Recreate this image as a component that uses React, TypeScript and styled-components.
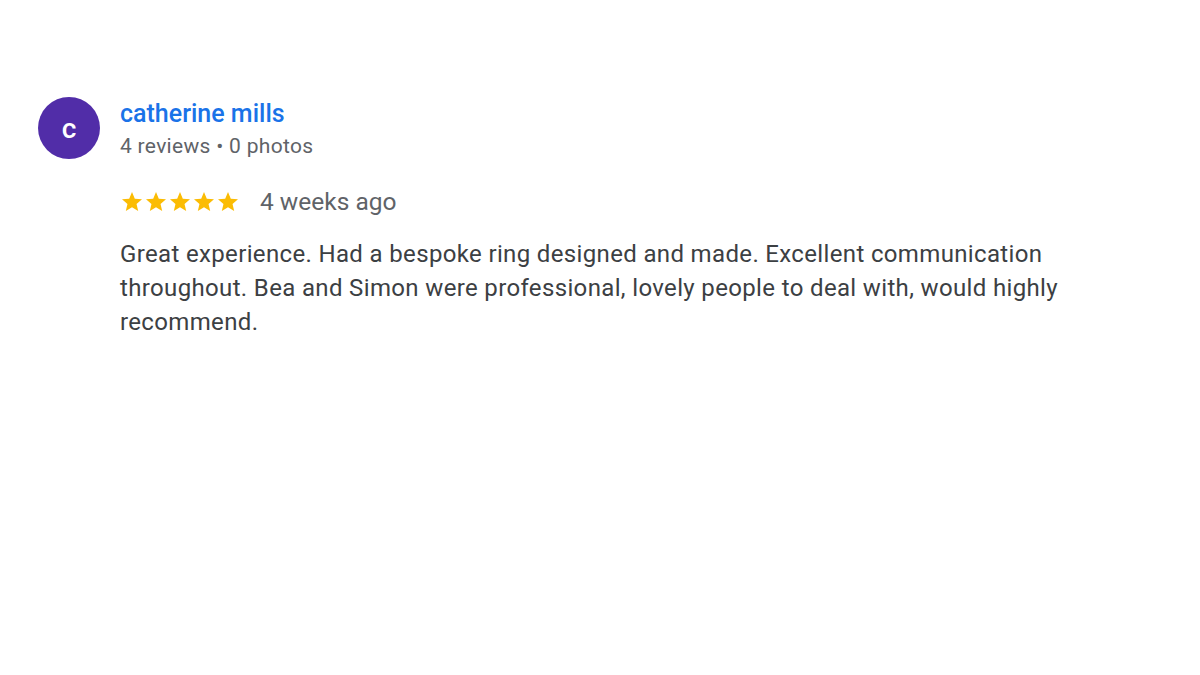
import React from "react";
import styled, { createGlobalStyle } from "styled-components";

const Global = createGlobalStyle`
  html, body { margin: 0; padding: 0; background: #fff; }
  body { font-family: Roboto, "Noto Sans", Arial, sans-serif; }
`;

const Page = styled.div`
  width: 1200px;
  height: 675px;
  box-sizing: border-box;
  padding: 97px 0 0 38px;
`;

const Review = styled.div`
  display: flex;
  gap: 20px;
  align-items: flex-start;
`;

const Avatar = styled.div`
  width: 62px;
  height: 62px;
  border-radius: 50%;
  background: #512da8;
  color: #fff;
  display: flex;
  align-items: center;
  justify-content: center;
  font-size: 28px;
  font-weight: 500;
  flex-shrink: 0;
`;

const Body = styled.div`
  display: flex;
  flex-direction: column;
  width: 1000px;
`;

const Name = styled.div`
  color: #1a73e8;
  font-size: 25px;
  font-weight: 500;
  line-height: 30px;
  margin-top: 1.5px;
`;

const Meta = styled.div`
  color: #5f6368;
  font-size: 21px;
  line-height: 28px;
  margin-top: 3px;
  letter-spacing: 0.3px;
`;

const RatingRow = styled.div`
  display: flex;
  align-items: center;
  gap: 20px;
  margin-top: 27px;
`;

const Stars = styled.div`
  display: flex;
`;

const When = styled.div`
  color: #5f6368;
  font-size: 24.5px;
  line-height: 30px;
`;

const Text = styled.p`
  margin: 20px 0 0;
  color: #3c4043;
  font-size: 24px;
  line-height: 34px;
  letter-spacing: 0.35px;
`;

const Star = () => (
  <svg width="24" height="24" viewBox="0 0 24 24">
    <path
      fill="#fbbc04"
      d="M12 17.27L18.18 21l-1.64-7.03L22 9.24l-7.19-.61L12 2 9.19 8.63 2 9.24l5.46 4.73L5.82 21z"
    />
  </svg>
);

export default function App() {
  return (
    <>
      <Global />
      <Page>
        <Review>
          <Avatar>c</Avatar>
          <Body>
            <Name>catherine mills</Name>
            <Meta>4 reviews • 0 photos</Meta>
            <RatingRow>
              <Stars>
                {[0, 1, 2, 3, 4].map((i) => (
                  <Star key={i} />
                ))}
              </Stars>
              <When>4 weeks ago</When>
            </RatingRow>
            <Text>
              Great experience. Had a bespoke ring designed and made. Excellent communication
              throughout. Bea and Simon were professional, lovely people to deal with, would highly
              recommend.
            </Text>
          </Body>
        </Review>
      </Page>
    </>
  );
}
